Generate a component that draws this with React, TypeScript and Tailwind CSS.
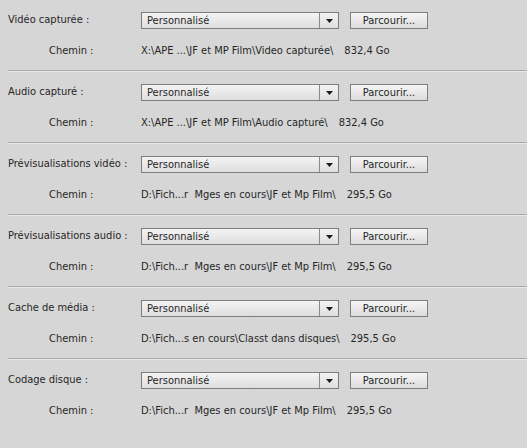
const rows = [
  { label: 'Vidéo capturée :', path: 'X:\\APE ...\\JF et MP Film\\Video capturée\\', size: '832,4 Go' },
  { label: 'Audio capturé :', path: 'X:\\APE ...\\JF et MP Film\\Audio capturé\\', size: '832,4 Go' },
  { label: 'Prévisualisations vidéo :', path: 'D:\\Fich...r  Mges en cours\\JF et Mp Film\\', size: '295,5 Go' },
  { label: 'Prévisualisations audio :', path: 'D:\\Fich...r  Mges en cours\\JF et Mp Film\\', size: '295,5 Go' },
  { label: 'Cache de média :', path: 'D:\\Fich...s en cours\\Classt dans disques\\', size: '295,5 Go' },
  { label: 'Codage disque :', path: 'D:\\Fich...r  Mges en cours\\JF et Mp Film\\', size: '295,5 Go' },
]

function Row({ label, path, size, last }: { label: string; path: string; size: string; last: boolean }) {
  return (
    <div className="pt-[12px]">
      <div className="flex items-center h-[17px]">
        <div className="w-[141px] pl-[8px] whitespace-nowrap">{label}</div>
        <div className="w-[198px] h-[17px] flex border border-[#7d7d7d] bg-gradient-to-b from-[#f4f4f4] to-[#dedede]">
          <div className="flex-1 pl-[5px] leading-[15px]">Personnalisé</div>
          <div className="w-[19px] border-l border-[#8a8a8a] flex items-center justify-center">
            <svg width="7" height="4" viewBox="0 0 7 4">
              <path d="M0 0h7L3.5 4z" fill="#1a1a1a" />
            </svg>
          </div>
        </div>
        <button className="ml-[11px] w-[78px] h-[17px] border border-[#7d7d7d] bg-gradient-to-b from-[#f6f6f6] to-[#dcdcdc] leading-[15px] text-center">
          Parcourir...
        </button>
      </div>
      <div className="flex items-center h-[17px] mt-[14px]">
        <div className="w-[141px] pl-[49px]">Chemin :</div>
        <div className="whitespace-pre">{path}</div>
        <div className="ml-[11px]">{size}</div>
      </div>
      {!last && (
        <div className="ml-[8px] mt-[10px] h-[2px] border-t border-[#a9a9a9] border-b border-b-[#e9e9e9]" />
      )}
    </div>
  )
}

export default function App() {
  return (
    <div
      className="w-[527px] h-[448px] bg-[#d6d6d6] text-[#262626] text-[11px] overflow-hidden"
      style={{ fontFamily: 'Tahoma, "DejaVu Sans Condensed", "Liberation Sans", sans-serif' }}
    >
      {rows.map((r, i) => (
        <Row key={i} {...r} last={i === rows.length - 1} />
      ))}
    </div>
  )
}
